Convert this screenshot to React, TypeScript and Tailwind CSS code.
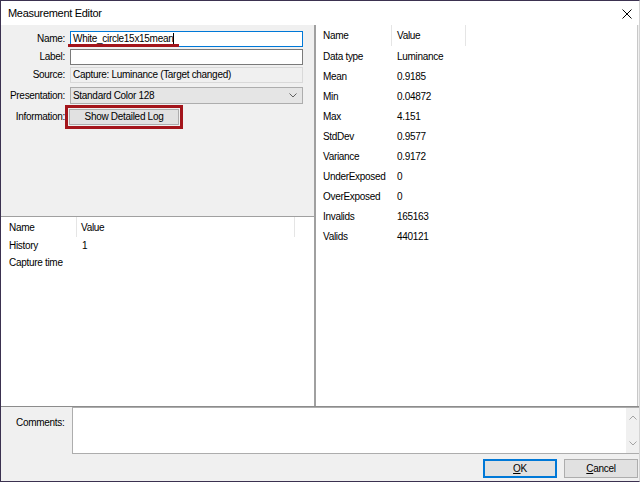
const stats: [string, string][] = [
  ["Data type", "Luminance"],
  ["Mean", "0.9185"],
  ["Min", "0.04872"],
  ["Max", "4.151"],
  ["StdDev", "0.9577"],
  ["Variance", "0.9172"],
  ["UnderExposed", "0"],
  ["OverExposed", "0"],
  ["Invalids", "165163"],
  ["Valids", "440121"],
]

function Chevron({ up = false }: { up?: boolean }) {
  return (
    <svg width="8" height="5" viewBox="0 0 8 5" className="block">
      <polyline
        points={up ? "0.5,4.5 4,1 7.5,4.5" : "0.5,0.5 4,4 7.5,0.5"}
        fill="none"
        stroke="currentColor"
        strokeWidth="1"
      />
    </svg>
  )
}

function FieldLabel({ children }: { children: string }) {
  return <div className="w-[64px] shrink-0 text-right leading-none whitespace-nowrap">{children}</div>
}

export default function App() {
  return (
    <div className="w-[640px] h-[482px] flex flex-col overflow-hidden bg-[#f0f0f0] border border-[#3b3150] border-r-[#d4d4d4] text-black text-[10px] tracking-[-0.3px] font-[family-name:'Liberation_Sans',Arial,sans-serif]">
      {/* title bar */}
      <div className="h-[24px] shrink-0 bg-white flex items-center justify-between pl-[7px] pr-[7px]">
        <span className="text-[11px] tracking-[-0.3px]">Measurement Editor</span>
        <svg width="10" height="10" viewBox="0 0 10 10" className="mt-[1px]">
          <path d="M0.5 0.5 L9.5 9.5 M9.5 0.5 L0.5 9.5" stroke="#000" strokeWidth="1" />
        </svg>
      </div>

      {/* main */}
      <div className="h-[381px] shrink-0 flex">
        <div className="w-[314px] shrink-0 flex flex-col border-r border-[#a0a0a0]">
          {/* form */}
          <div className="h-[191px] shrink-0 pt-[6px]">
            <div className="flex items-center h-[16px]">
              <FieldLabel>Name:</FieldLabel>
              <div className="relative ml-[5px] w-[233px] h-[16px] bg-white border border-[#0078d7] flex items-center pl-[2px]">
                <span className="leading-none">White_circle15x15mean</span>
                <span className="w-px h-[12px] bg-black" />
                <div className="absolute left-[-3px] top-[12px] w-[111px] h-[3px] bg-[#a3151b]" />
              </div>
            </div>
            <div className="flex items-center h-[16px] mt-[2px]">
              <FieldLabel>Label:</FieldLabel>
              <div className="ml-[5px] w-[233px] h-[16px] bg-white border border-[#7a7a7a]" />
            </div>
            <div className="flex items-center h-[16px] mt-[2px]">
              <FieldLabel>Source:</FieldLabel>
              <div className="ml-[5px] w-[233px] h-[16px] bg-[#f0f0f0] border border-[#d9d9d9] flex items-center pl-[2px] leading-none">
                Capture: Luminance (Target changed)
              </div>
            </div>
            <div className="flex items-center h-[17px] mt-[4px]">
              <FieldLabel>Presentation:</FieldLabel>
              <div className="ml-[5px] w-[233px] h-[17px] bg-[#e5e5e5] border border-[#adadad] flex items-center justify-between pl-[2px] pr-[5px] leading-none">
                <span>Standard Color 128</span>
                <span className="text-[#606060]">
                  <Chevron />
                </span>
              </div>
            </div>
            <div className="flex items-center h-[25px]">
              <FieldLabel>Information:</FieldLabel>
              <div className="border-[3px] border-[#a3151b] p-[1px]">
                <button className="w-[110px] h-[16px] bg-[#e1e1e1] border border-[#adadad] flex items-center justify-center leading-none">
                  Show Detailed Log
                </button>
              </div>
            </div>
          </div>

          {/* history list */}
          <div className="flex-1 bg-white border-t border-[#a0a0a0]">
            <div className="flex h-[20px] items-center">
              <div className="w-[76px] h-full pl-[8px] flex items-center border-r border-[#e5e5e5]">Name</div>
              <div className="w-[218px] h-full pl-[4px] flex items-center border-r border-[#e5e5e5]">Value</div>
            </div>
            <div className="flex h-[17px] items-center">
              <div className="w-[76px] pl-[8px]">History</div>
              <div className="pl-[5px]">1</div>
            </div>
            <div className="flex h-[17px] items-center">
              <div className="w-[76px] pl-[8px] whitespace-nowrap">Capture time</div>
            </div>
          </div>
        </div>

        {/* statistics list */}
        <div className="flex-1 bg-white border-l border-r border-[#a0a0a0] border-r-[#c8c8c8] mr-[1px]">
          <div className="flex h-[21px]">
            <div className="w-[76px] h-full pl-[7px] flex items-center border-r border-[#e5e5e5]">Name</div>
            <div className="w-[74px] h-full pl-[5px] flex items-center border-r border-[#e5e5e5]">Value</div>
          </div>
          {stats.map(([name, value]) => (
            <div key={name} className="flex h-[20px] items-center">
              <div className="w-[76px] pl-[7px] whitespace-nowrap">{name}</div>
              <div className="pl-[5px]">{value}</div>
            </div>
          ))}
        </div>
      </div>

      {/* bottom */}
      <div className="flex-1 border-t border-[#8c8c8c] flex flex-col">
        <div className="flex h-[47px]">
          <div className="w-[71px] shrink-0 pl-[15px] pt-[11px] leading-none whitespace-nowrap">Comments:</div>
          <div className="flex-1 bg-white border border-[#adadad] border-r-0 flex justify-end">
            <div className="w-[13px] bg-[#f0f0f0] flex flex-col items-center justify-between text-[#a3a3a3] py-[7px]">
              <Chevron up />
              <Chevron />
            </div>
          </div>
        </div>
        <div className="flex justify-end gap-[7px] mt-[5px] pr-[1px]">
          <button className="w-[74px] h-[19px] bg-[#e1e1e1] border-2 border-[#0078d7] flex items-center justify-center leading-none">
            <span className="underline underline-offset-1">O</span>K
          </button>
          <button className="w-[74px] h-[19px] bg-[#e1e1e1] border border-[#adadad] flex items-center justify-center leading-none">
            <span className="underline underline-offset-1">C</span>ancel
          </button>
        </div>
      </div>
    </div>
  )
}
